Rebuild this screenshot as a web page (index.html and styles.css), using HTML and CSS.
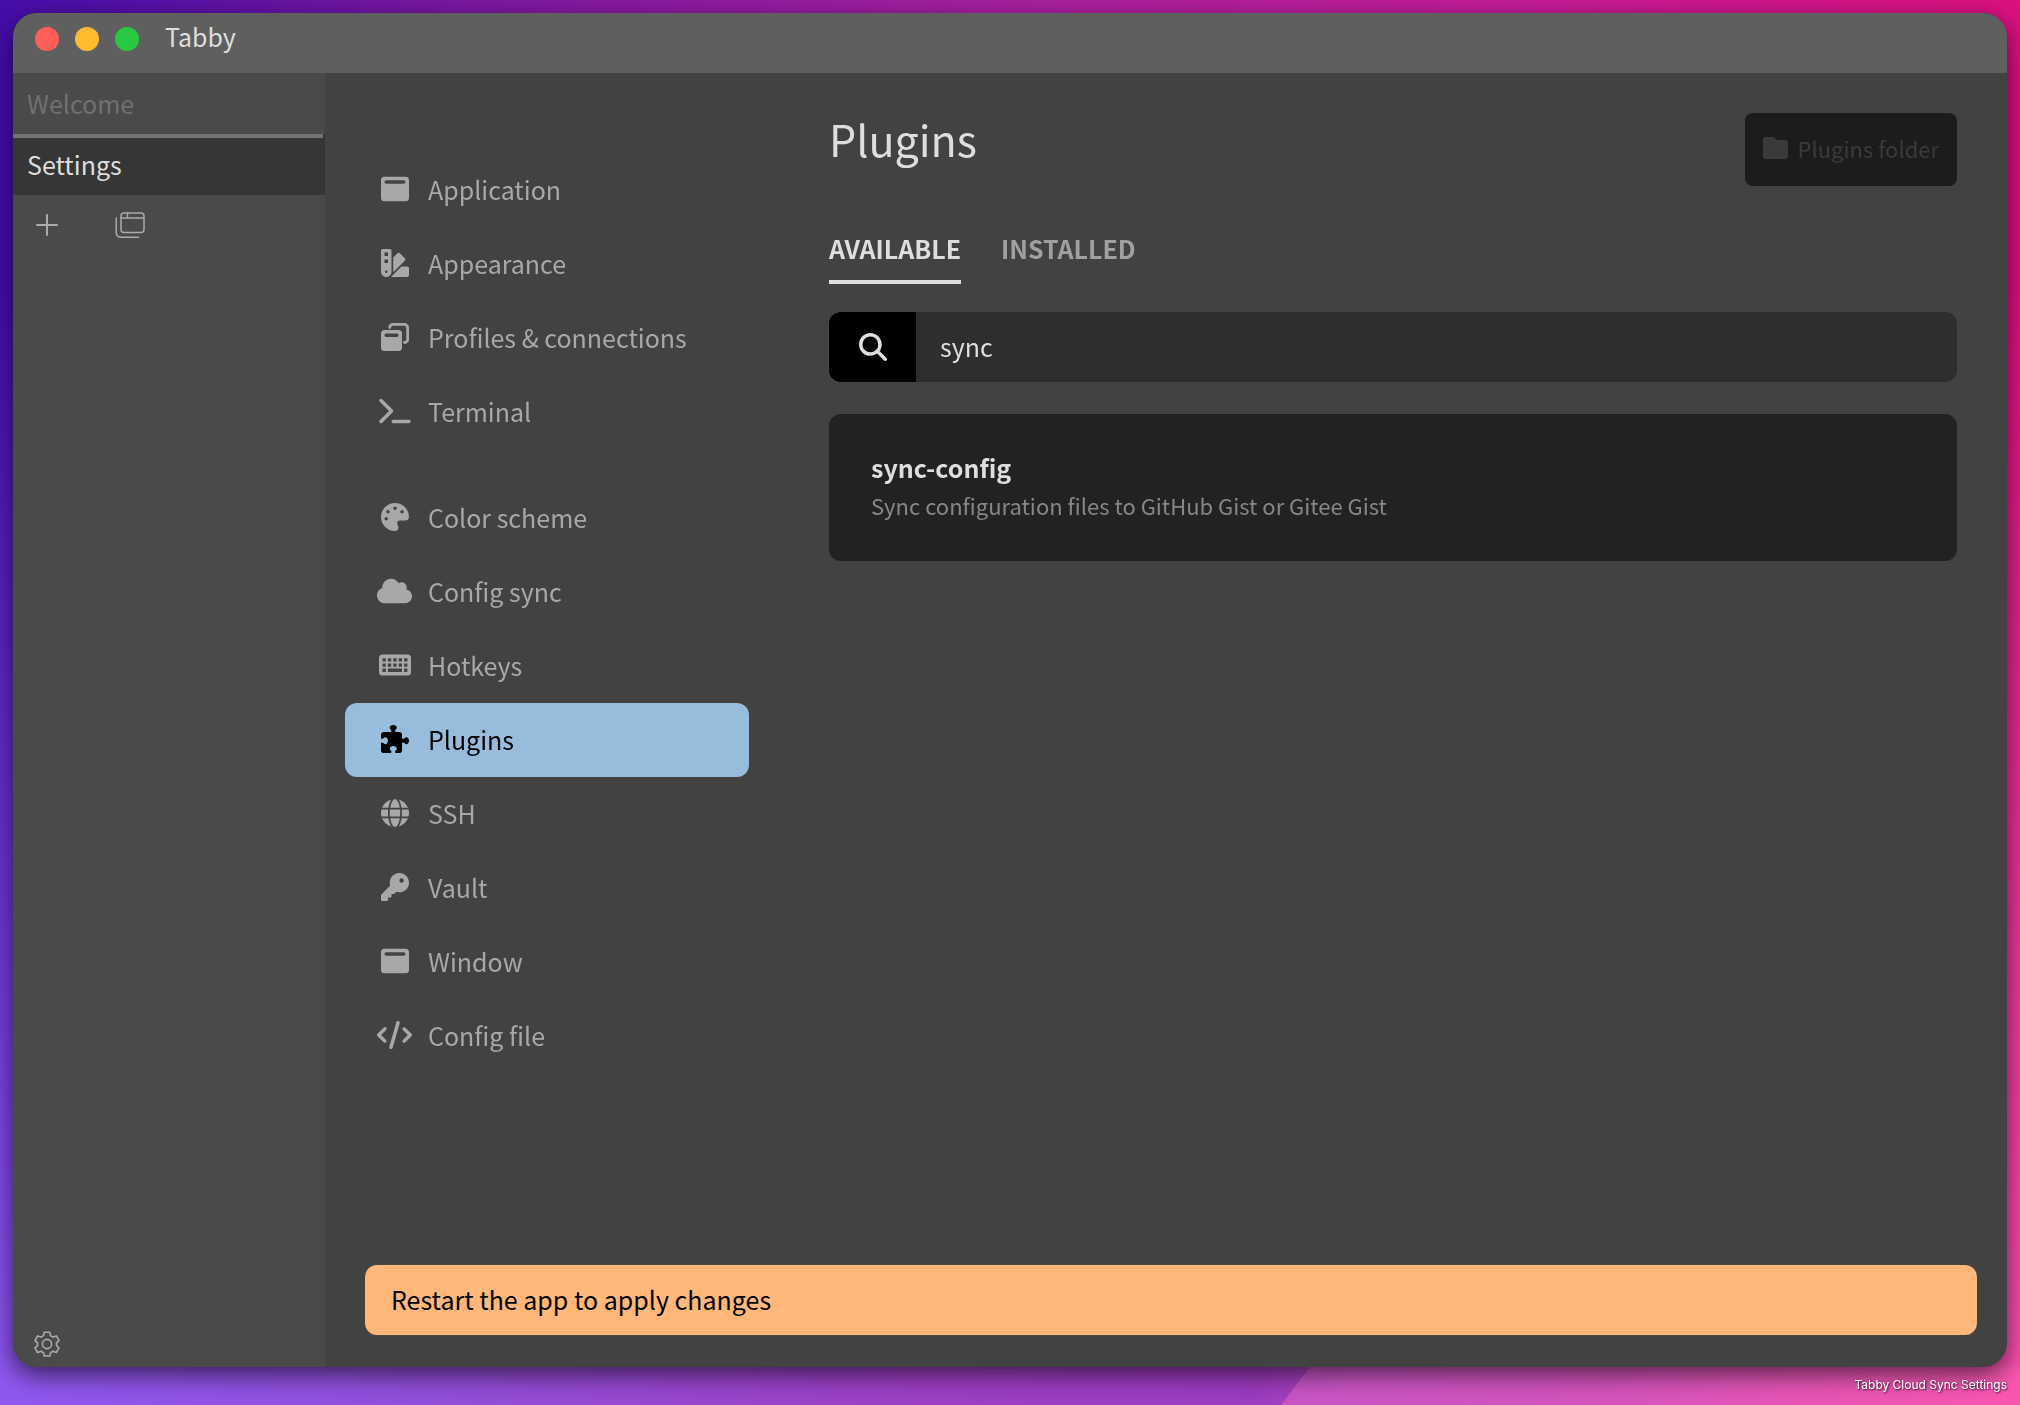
FILE: index.html
```html
<!DOCTYPE html>
<html lang="en">
<head>
<meta charset="utf-8">
<title>Tabby</title>
<meta name="viewport" content="width=device-width, initial-scale=1">
<link rel="stylesheet" href="styles.css">
</head>
<body>
<div class="desktop-glow"></div>
<div class="desktop-panel"></div>
<div class="window">
  <header class="titlebar">
    <div class="lights">
      <button class="light light-close" type="button" aria-label="Close"></button>
      <button class="light light-min" type="button" aria-label="Minimize"></button>
      <button class="light light-max" type="button" aria-label="Zoom"></button>
    </div>
    <span class="app-name">Tabby</span>
  </header>
  <div class="body">
    <aside class="sidebar">
      <button class="tab" type="button">Welcome</button>
      <div class="tab-progress"></div>
      <button class="tab tab-active" type="button">Settings</button>
      <div class="tab-tools">
        <button class="tool" type="button" aria-label="New tab">
          <svg width="22" height="22" viewBox="0 0 22 22" fill="none" stroke="currentColor" stroke-width="2" stroke-linecap="round"><path d="M11 1v20M1 11h20"/></svg>
        </button>
        <button class="tool" type="button" aria-label="Profiles">
          <svg width="30" height="28" viewBox="0 0 30 28" fill="none" stroke="currentColor" stroke-width="1.500" stroke-linecap="round"><rect x="6" y="2" width="23" height="19.500" rx="3"/><path d="M6 7h23M12.500 2v5M1.200 7v14.500a4.500 4.500 0 0 0 4.500 4.700h18"/></svg>
        </button>
      </div>
      <button class="tool gear" type="button" aria-label="Settings">
        <svg width="26" height="26" viewBox="0 0 26 26" fill="none" stroke="currentColor" stroke-width="1.600" stroke-linejoin="round"><circle cx="13" cy="13" r="4.600"/><path d="M10.200 1.200h5.600l.7 3.400 2.500 1.500 3.400-1.200 2.600 4.700-2.500 2.300v2.700l2.500 2.200-2.600 4.700-3.400-1.200-2.500 1.500-.7 3.200h-5.600l-.7-3.200L7 20.300l-3.400 1.200L1 16.800l2.500-2.200v-2.700L1 9.600l2.600-4.700L7 6.100l2.500-1.500z"/></svg>
      </button>
    </aside>
    <main class="settings">
      <div class="columns">
        <nav class="nav">
          <a class="nav-item" href="#application"><span class="nav-icon"><svg width="28" height="28" viewBox="0 0 28 28"><path fill="currentColor" fill-rule="evenodd" d="M3.500 1.750h21A3.500 3.500 0 0 1 28 5.250v17.500a3.500 3.500 0 0 1-3.500 3.500h-21A3.500 3.500 0 0 1 0 22.750V5.250a3.500 3.500 0 0 1 3.500-3.500zM5.250 5.250a1.750 1.750 0 0 0 0 3.500h17.500a1.750 1.750 0 0 0 0-3.500z"/></svg></span>Application</a>
          <a class="nav-item" href="#appearance"><span class="nav-icon"><svg width="28" height="28" viewBox="0 0 512 512"><path fill="currentColor" d="M0 32C0 14.300 14.300 0 32 0H160c17.700 0 32 14.300 32 32V416c0 53-43 96-96 96s-96-43-96-96V32zM223.600 425.900c.3-3.300 .4-6.600 .4-9.900V154l75.400-75.400c12.500-12.500 32.800-12.500 45.300 0l90.500 90.500c12.500 12.500 12.500 32.800 0 45.300L223.600 425.900zM182.800 512l192-192H480c17.700 0 32 14.300 32 32V480c0 17.700-14.300 32-32 32H182.800zM128 64H64v64h64V64zM64 192v64h64V192H64zM96 440a24 24 0 1 0 0-48 24 24 0 1 0 0 48z" fill-rule="evenodd"/></svg></span>Appearance</a>
          <a class="nav-item" href="#profiles"><span class="nav-icon"><svg width="28" height="28" viewBox="0 0 28 28"><path fill="currentColor" fill-rule="evenodd" d="M3.500 7h14a3.500 3.500 0 0 1 3.500 3.500v14a3.500 3.500 0 0 1-3.500 3.500h-14A3.500 3.500 0 0 1 0 24.500v-14A3.500 3.500 0 0 1 3.500 7zM5.200 10.500a1.750 1.750 0 0 0 0 3.500h10.600a1.750 1.750 0 0 0 0-3.500z"/><path d="M8.750 4.500a3 3 0 0 1 3-3.100h11.500a3.400 3.400 0 0 1 3.400 3.400v11.500a3 3 0 0 1-3.200 3.200" fill="none" stroke="currentColor" stroke-width="2.800" stroke-linecap="round"/></svg></span>Profiles &amp; connections</a>
          <a class="nav-item" href="#terminal"><span class="nav-icon"><svg width="32" height="28" viewBox="0 0 576 512"><path fill="currentColor" d="M9.400 86.600C-3.100 74.100-3.100 53.900 9.400 41.400s32.800-12.500 45.300 0l192 192c12.500 12.500 12.500 32.800 0 45.300l-192 192c-12.500 12.500-32.800 12.500-45.300 0s-12.500-32.800 0-45.300L178.700 256 9.400 86.600zM256 416H544c17.700 0 32 14.300 32 32s-14.300 32-32 32H256c-17.700 0-32-14.300-32-32s14.300-32 32-32z"/></svg></span>Terminal</a>
          <a class="nav-item nav-group" href="#colors"><span class="nav-icon"><svg width="28" height="28" viewBox="0 0 512 512"><path fill="currentColor" fill-rule="evenodd" d="M512 256c0 .9 0 1.800 0 2.700c-.4 36.500-33.600 61.300-70.100 61.300H344c-26.500 0-48 21.500-48 48c0 3.400 .4 6.700 1 9.900c2.100 10.200 6.500 20 10.800 29.900c6.100 13.800 12.100 27.500 12.100 42c0 31.800-21.600 60.700-53.400 62c-3.500 .1-7 .2-10.600 .2C114.600 512 0 397.400 0 256S114.600 0 256 0S512 114.600 512 256zM128 288a32 32 0 1 0-64 0 32 32 0 1 0 64 0zm0-96a32 32 0 1 0 0-64 32 32 0 1 0 0 64zM288 96a32 32 0 1 0-64 0 32 32 0 1 0 64 0zm96 96a32 32 0 1 0 0-64 32 32 0 1 0 0 64z"/></svg></span>Color scheme</a>
          <a class="nav-item" href="#sync"><span class="nav-icon"><svg width="35" height="28" viewBox="0 0 640 512"><path fill="currentColor" d="M0 336c0 79.500 64.500 144 144 144H512c70.700 0 128-57.300 128-128c0-61.900-44-113.600-102.400-125.400c4.100-10.700 6.400-22.400 6.400-34.600c0-53-43-96-96-96c-19.700 0-38.100 6-53.300 16.200C367 64.200 315.300 32 256 32C167.600 32 96 103.600 96 192c0 2.700 .1 5.400 .2 8.100C40.200 219.800 0 273.200 0 336z"/></svg></span>Config sync</a>
          <a class="nav-item" href="#hotkeys"><span class="nav-icon"><svg width="32" height="28" viewBox="0 0 32 28"><path fill="currentColor" fill-rule="evenodd" d="M3.500 3.500h25A3.500 3.500 0 0 1 32 7v14a3.500 3.500 0 0 1-3.500 3.500h-25A3.500 3.500 0 0 1 0 21V7a3.500 3.500 0 0 1 3.500-3.500zM3.500 7.200v3.300h3.300V7.200zM8.900 7.200v3.300h3.300V7.200zM14.300 7.200v3.300h3.300V7.200zM19.700 7.200v3.300H23V7.200zM25.100 7.200v3.300h3.300V7.200zM3.500 12.400v3.300h3.300v-3.300zM8.900 12.400v3.300h3.300v-3.300zM14.300 12.400v3.300h3.300v-3.300zM19.700 12.400v3.300H23v-3.300zM25.100 12.400v3.300h3.300v-3.300zM3.500 17.600v3.300h3.300v-3.300zM8.900 17.600v3.300H23v-3.300zM25.100 17.600v3.300h3.300v-3.300z"/></svg></span>Hotkeys</a>
          <a class="nav-item nav-active" href="#plugins" aria-current="page"><span class="nav-icon"><svg width="28" height="28" viewBox="0 0 512 512"><path fill="currentColor" d="M192 104.800c0-9.200-5.800-17.300-13.200-22.800C167.200 73.300 160 61.300 160 48c0-26.500 28.700-48 64-48s64 21.500 64 48c0 13.300-7.200 25.300-18.800 34c-7.400 5.500-13.200 13.600-13.200 22.800c0 12.800 10.400 23.200 23.200 23.200H336c26.500 0 48 21.500 48 48v56.800c0 12.800 10.400 23.200 23.200 23.200c9.200 0 17.300-5.800 22.800-13.200c8.700-11.600 20.700-18.800 34-18.800c26.500 0 48 28.700 48 64s-21.500 64-48 64c-13.300 0-25.300-7.200-34-18.800c-5.500-7.400-13.600-13.200-22.800-13.200c-12.800 0-23.200 10.400-23.200 23.200V464c0 26.500-21.500 48-48 48H279.200c-12.800 0-23.200-10.400-23.200-23.200c0-9.200 5.800-17.300 13.200-22.800c11.600-8.700 18.800-20.700 18.800-34c0-26.500-28.700-48-64-48s-64 21.500-64 48c0 13.300 7.200 25.300 18.800 34c7.400 5.500 13.200 13.600 13.200 22.800c0 12.800-10.400 23.200-23.200 23.200H48c-26.500 0-48-21.500-48-48V343.200C0 330.400 10.400 320 23.200 320c9.200 0 17.300 5.800 22.800 13.200C54.700 344.800 66.700 352 80 352c26.500 0 48-28.700 48-64s-21.500-64-48-64c-13.300 0-25.300 7.200-34 18.800C40.500 250.200 32.400 256 23.200 256C10.400 256 0 245.600 0 232.800V176c0-26.500 21.500-48 48-48H168.800c12.800 0 23.200-10.400 23.200-23.200z"/></svg></span>Plugins</a>
          <a class="nav-item" href="#ssh"><span class="nav-icon"><svg width="28" height="28" viewBox="0 0 512 512"><path fill="currentColor" d="M352 256c0 22.200-1.200 43.600-3.300 64H163.300c-2.200-20.400-3.300-41.800-3.300-64s1.200-43.600 3.300-64H348.700c2.200 20.400 3.300 41.800 3.300 64zm28.800-64H503.900c5.300 20.500 8.100 41.900 8.100 64s-2.800 43.500-8.100 64H380.800c2.100-20.600 3.200-42 3.200-64s-1.100-43.400-3.200-64zm112.600-32H376.700c-10-63.900-29.800-117.400-55.300-151.600c78.300 20.700 142 77.500 171.900 151.600zm-149.100 0H167.700c6.100-36.400 15.500-68.600 27-94.700c10.500-23.600 22.200-40.700 33.500-51.500C239.400 3.200 248.700 0 256 0s16.600 3.200 27.800 13.800c11.300 10.800 23 27.900 33.500 51.500c11.600 26 20.900 58.200 27 94.700zm-209 0H18.600C48.600 85.900 112.200 29.100 190.600 8.400C165.100 42.600 145.300 96.100 135.300 160zM8.100 192H131.200c-2.100 20.600-3.200 42-3.200 64s1.100 43.400 3.200 64H8.100C2.800 299.500 0 278.100 0 256s2.800-43.500 8.100-64zM194.700 446.600c-11.600-26-20.900-58.200-27-94.600H344.300c-6.100 36.400-15.500 68.600-27 94.600c-10.500 23.600-22.200 40.700-33.500 51.500C272.600 508.800 263.300 512 256 512s-16.600-3.200-27.800-13.800c-11.300-10.800-23-27.900-33.500-51.500zM135.300 352c10 63.900 29.800 117.400 55.300 151.600C112.200 482.900 48.600 426.100 18.600 352H135.300zm358.100 0c-30 74.100-93.600 130.900-171.900 151.600c25.500-34.200 45.200-87.700 55.300-151.600H493.400z"/></svg></span>SSH</a>
          <a class="nav-item" href="#vault"><span class="nav-icon"><svg width="28" height="28" viewBox="0 0 512 512"><path fill="currentColor" d="M336 352c97.200 0 176-78.800 176-176S433.200 0 336 0S160 78.800 160 176c0 18.700 2.900 36.800 8.300 53.700L7 391c-4.500 4.500-7 10.600-7 17v80c0 13.300 10.700 24 24 24h80c13.300 0 24-10.700 24-24V448h40c13.300 0 24-10.700 24-24V384h40c6.400 0 12.500-2.500 17-7l33.300-33.300c16.900 5.400 35 8.300 53.700 8.300zM376 96a40 40 0 1 1 0 80 40 40 0 1 1 0-80z"/></svg></span>Vault</a>
          <a class="nav-item" href="#window"><span class="nav-icon"><svg width="28" height="28" viewBox="0 0 28 28"><path fill="currentColor" fill-rule="evenodd" d="M3.500 1.750h21A3.500 3.500 0 0 1 28 5.250v17.500a3.500 3.500 0 0 1-3.500 3.500h-21A3.500 3.500 0 0 1 0 22.750V5.250a3.500 3.500 0 0 1 3.500-3.500zM5.250 5.250a1.750 1.750 0 0 0 0 3.500h17.500a1.750 1.750 0 0 0 0-3.500z"/></svg></span>Window</a>
          <a class="nav-item" href="#config-file"><span class="nav-icon"><svg width="35" height="28" viewBox="0 0 640 512"><path fill="currentColor" d="M392.800 1.200c-17-4.900-34.700 5-39.600 22l-128 448c-4.900 17 5 34.700 22 39.600s34.700-5 39.600-22l128-448c4.900-17-5-34.700-22-39.600zm80.600 120.100c-12.500 12.500-12.500 32.800 0 45.300L562.700 256l-89.400 89.400c-12.500 12.500-12.500 32.800 0 45.300s32.800 12.500 45.300 0l112-112c12.500-12.500 12.500-32.800 0-45.300l-112-112c-12.500-12.500-32.800-12.500-45.300 0zm-306.700 0c-12.500-12.500-32.800-12.500-45.300 0l-112 112c-12.500 12.500-12.500 32.800 0 45.300l112 112c12.500 12.500 32.800 12.500 45.300 0s12.500-32.800 0-45.300L77.300 256l89.400-89.400c12.500-12.500 12.500-32.800 0-45.300z"/></svg></span>Config file</a>
        </nav>
        <section class="content">
          <div class="heading-row">
            <h1 class="heading">Plugins</h1>
            <button class="folder-button" type="button"><svg width="25" height="22" viewBox="0 0 25 22"><path fill="currentColor" d="M3 0h6.500c1 0 1.900.5 2.500 1.300l.6.700c.4.600 1 1 1.900 1H22a3 3 0 0 1 3 3v13a3 3 0 0 1-3 3H3a3 3 0 0 1-3-3V3a3 3 0 0 1 3-3z"/></svg>Plugins folder</button>
          </div>
          <div class="content-tabs">
            <a class="content-tab content-tab-active" href="#available">AVAILABLE</a>
            <a class="content-tab" href="#installed">INSTALLED</a>
          </div>
          <div class="search">
            <label class="search-icon" for="search" aria-label="Search plugins"><svg width="28" height="28" viewBox="0 0 512 512"><path fill="currentColor" d="M416 208c0 45.900-14.900 88.300-40 122.700L502.600 457.400c12.500 12.500 12.500 32.800 0 45.300s-32.800 12.500-45.300 0L330.700 376c-34.400 25.200-76.800 40-122.700 40C93.100 416 0 322.900 0 208S93.100 0 208 0S416 93.100 416 208zM208 352a144 144 0 1 0 0-288 144 144 0 1 0 0 288z"/></svg></label>
            <input class="search-input" id="search" type="text" value="sync">
          </div>
          <button class="plugin" type="button">
            <span class="plugin-text">
              <strong class="plugin-name">sync-config</strong>
              <span class="plugin-desc">Sync configuration files to GitHub Gist or Gitee Gist</span>
            </span>
            <svg class="plugin-chevron" width="32" height="16" viewBox="0 0 32 16" fill="none" stroke="currentColor" stroke-width="2"><path d="M1 0l15 15L31 0"/></svg>
          </button>
        </section>
      </div>
      <div class="alert" role="alert">Restart the app to apply changes</div>
    </main>
  </div>
</div>
<footer class="caption">Tabby Cloud Sync Settings</footer>
</body>
</html>
```
FILE: styles.css
```css
* {
  box-sizing: border-box;
}

body {
  margin: 0;
  min-height: 100vh;
  padding: 13px 13px 0;
  display: flex;
  flex-direction: column;
  font-family: "Noto Sans CJK SC", "Noto Sans", sans-serif;
  font-size: 25px;
  line-height: 36px;
  color: #dedede;
  background: linear-gradient(to right, #450daa, #7a17a2 22%, #a820a0 50%, #c41c98 75%, #dc1080);
}

button,
input {
  font: inherit;
  color: inherit;
  border: 0;
  margin: 0;
}

button {
  cursor: pointer;
}

svg {
  display: block;
}

/* Wallpaper */
.desktop-glow,
.desktop-panel {
  position: fixed;
  inset: 0;
  z-index: -1;
}

.desktop-glow {
  background: linear-gradient(to right, #9058f0, #9250dc 20%, #9c40c4 45%, #9c3cc0 62%, #d050b8 75%, #fa52b0);
  mask-image: linear-gradient(transparent 20%, #000);
}

.desktop-panel {
  background: linear-gradient(to right, #c855c6 64%, #d654bc 80%, #fa56b0);
  clip-path: polygon(1310px 1367px, 100% 1367px, 100% 100%, 1281px 100%);
}

/* Window frame */
.window {
  flex: 1;
  display: flex;
  flex-direction: column;
  border-radius: 24px;
  overflow: hidden;
  background: #424242;
  box-shadow: 0 8px 24px rgba(0, 0, 0, 0.6);
}

.titlebar {
  display: flex;
  gap: 26px;
  height: 60px;
  padding: 5px 22px;
  background: #5f5f5f;
}

.lights {
  display: flex;
  gap: 16px;
  height: 42px;
  align-items: center;
}

.light {
  width: 24px;
  height: 24px;
  padding: 0;
  border-radius: 50%;
}

.light-close {
  background: #ff5f57;
}

.light-min {
  background: #febc2e;
}

.light-max {
  background: #28c840;
}

.body {
  flex: 1;
  display: flex;
}

/* Terminal tabs */
.sidebar {
  display: flex;
  flex-direction: column;
  width: 312px;
  background: #4a4a4a;
}

.tab {
  height: 61px;
  padding: 0 14px 2px;
  text-align: left;
  color: #707070;
  background: none;
}

.tab-progress {
  height: 4px;
  border-right: 2px solid #363636;
  background: #737373;
}

.tab-active {
  height: 57px;
  padding-bottom: 6px;
  color: #dedede;
  background: #363636;
}

.tab-tools {
  display: flex;
  gap: 35px;
  padding: 12px 10px;
}

.tool {
  display: flex;
  align-items: center;
  justify-content: center;
  width: 48px;
  height: 36px;
  padding: 0;
  color: #ababab;
  background: none;
}

.gear {
  margin: auto 10px 5px;
}

/* Settings page */
.settings {
  flex: 1;
  display: flex;
  flex-direction: column;
  justify-content: space-between;
  padding: 0 30px 32px 20px;
}

.columns {
  display: flex;
  gap: 80px;
}

.nav {
  width: 404px;
  padding-top: 80px;
}

.nav-item {
  display: flex;
  align-items: center;
  gap: 16px;
  height: 74px;
  padding: 0 32px 2px;
  border-radius: 12px;
  color: #a8a8a8;
  text-decoration: none;
}

.nav-group {
  margin-top: 32px;
}

.nav-active {
  color: #000;
  background: #97bcdc;
}

.nav-icon {
  display: flex;
  justify-content: center;
  width: 35px;
}

.content {
  flex: 1;
  padding: 40px 20px 0 0;
}

.heading-row {
  display: flex;
  justify-content: space-between;
  align-items: flex-start;
}

.heading {
  margin: 0;
  font-size: 43px;
  line-height: 50px;
  font-weight: 400;
}

.folder-button {
  display: flex;
  align-items: center;
  gap: 10px;
  height: 73px;
  padding: 0 18px 4px;
  border-radius: 8px;
  font-size: 22px;
  color: #3a3a3a;
  background: #1c1c1c;
}

.content-tabs {
  display: flex;
  gap: 40px;
  padding: 44px 0 28px;
}

.content-tab {
  padding-bottom: 14px;
  border-bottom: 4px solid transparent;
  font-weight: 700;
  color: #a0a0a0;
  text-decoration: none;
}

.content-tab-active {
  color: #dedede;
  border-color: #dedede;
}

.search {
  display: flex;
  height: 70px;
  border-radius: 12px;
  overflow: hidden;
  background: #2e2e2e;
}

.search-icon {
  display: flex;
  align-items: center;
  justify-content: center;
  width: 87px;
  background: #000;
}

.search-input {
  flex: 1;
  padding: 0 24px 2px;
  background: none;
  outline: none;
}

.plugin {
  display: flex;
  align-items: center;
  justify-content: space-between;
  width: 100%;
  height: 147px;
  margin-top: 32px;
  padding: 0 46px 0 42px;
  border-radius: 12px;
  text-align: left;
  background: #222;
}

.plugin-text {
  display: flex;
  flex-direction: column;
  gap: 2px;
  padding-bottom: 4px;
}

.plugin-name {
  font-weight: 700;
}

.plugin-desc {
  font-size: 22px;
  color: #878787;
}

.plugin-chevron {
  color: #212529;
}

.alert {
  margin-left: 20px;
  padding: 16px 26px 18px;
  border-radius: 12px;
  color: #000;
  background: #ffb87a;
}

/* Desktop caption */
.caption {
  height: 38px;
  font-family: Inter, sans-serif;
  font-size: 12px;
  line-height: 36px;
  text-align: right;
  color: #fff;
  text-shadow: 1px 1px 2px rgba(0, 0, 0, 0.8);
}
```
